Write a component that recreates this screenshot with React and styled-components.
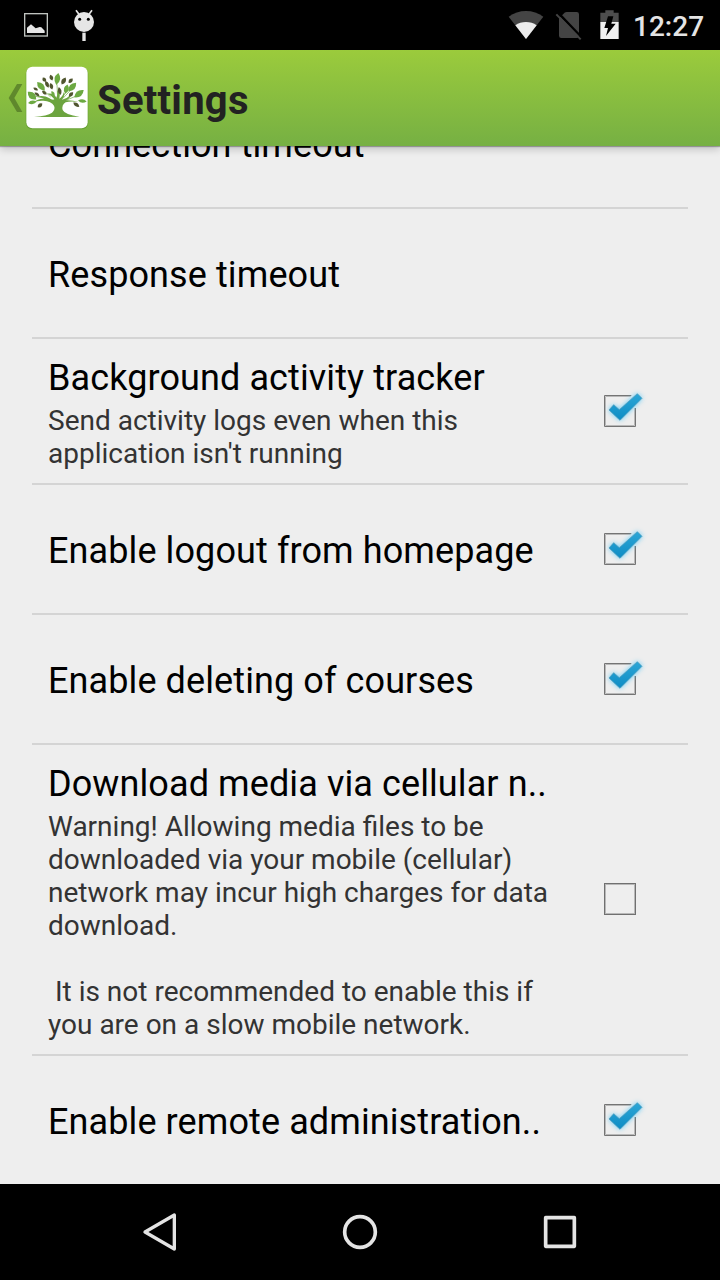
import React from "react";
import styled, { createGlobalStyle } from "styled-components";

const GlobalStyle = createGlobalStyle`
  * { box-sizing: border-box; }
  body {
    margin: 0;
    background: #eee;
    font-family: Roboto, "Liberation Sans", sans-serif;
  }
`;

const Screen = styled.div`
  width: 720px;
  height: 1280px;
  display: flex;
  flex-direction: column;
  overflow: hidden;
  background: #eee;
`;

const StatusBar = styled.div`
  flex: 0 0 50px;
  display: flex;
  justify-content: space-between;
  background: #000;
  color: #e4e4e4;
`;

const StatusGroup = styled.div`
  display: flex;
  align-items: center;
  padding-right: ${(p) => (p.$end ? "16px" : "0")};
`;

const Clock = styled.span`
  width: 71px;
  margin-left: 13px;
  font-size: 28px;
  line-height: 34px;
  font-weight: 500;
  white-space: nowrap;
  padding-top: 3px;
`;

const ActionBar = styled.header`
  flex: 0 0 96px;
  display: flex;
  align-items: center;
  background: linear-gradient(#9bcb3c, #76b043);
  box-shadow: 0 1px 1px rgba(0, 0, 0, 0.28), 0 3px 8px rgba(0, 0, 0, 0.2);
  z-index: 1;
`;

const Icon = styled.svg`
  display: block;
  flex: none;
`;

const ScreenTitle = styled.h1`
  margin: 0 0 0 8px;
  padding-top: 5px;
  font-size: 40px;
  line-height: 48px;
  font-weight: 700;
  letter-spacing: 0.25px;
  color: #222;
`;

const List = styled.main`
  flex: 0 0 1038px;
  display: flex;
  flex-direction: column;
  justify-content: flex-end;
  overflow: hidden;
  padding: 0 32px;
`;

const Row = styled.section`
  flex: none;
  height: ${(p) => p.$height}px;
  display: flex;
  align-items: center;
  padding-left: 16px;
  & + & {
    border-top: 2px solid #d4d4d4;
  }
`;

const Labels = styled.div`
  flex: 0 0 542px;
  padding-top: ${(p) => (p.$summary ? "5px" : "4px")};
`;

const Title = styled.div`
  font-size: 36px;
  line-height: 42px;
  letter-spacing: 0.1px;
  color: #000;
  white-space: nowrap;
`;

const Summary = styled.div`
  margin-top: 5px;
  font-size: 28px;
  line-height: 33px;
  color: #333;
  white-space: pre;
`;

const GlowCheck = styled.path`
  filter: drop-shadow(0 0 8px rgba(80, 200, 250, 0.9));
`;

function NotificationIcons() {
  return (
    <Icon width="120" height="50" viewBox="0 0 360 150">
      <rect x="74" y="41" width="68" height="67" fill="none" stroke="#bfc3bf" strokeWidth="4" />
      <path d="M81 99V83l12-10 14 12 12-4 5 1 10 10v7z" fill="#e6e6e6" />
      <g fill="#e6e6e6">
        <circle cx="252" cy="66" r="30" />
        <rect x="247" y="98" width="10" height="25" />
        <path d="M228 31l10 13M276 31l-10 13" stroke="#e6e6e6" strokeWidth="5" />
      </g>
      <circle cx="239" cy="58" r="4.5" />
      <circle cx="265" cy="58" r="4.5" />
    </Icon>
  );
}

function SystemIcons() {
  return (
    <Icon width="120" height="50" viewBox="0 0 360 150">
      <path d="M26 50Q49 33 78 33T130 50L78 117z" fill="#444" />
      <path d="M46 76Q60 66 78 66T110 76L78 117z" fill="#ececec" />
      <path d="M190 42Q194 36 200 36H230Q237 36 237 43V108Q237 114 230 114H184Q177 114 177 107V55z" fill="#444" />
      <path d="M174 38L247 114" stroke="#000" strokeWidth="7" />
      <path d="M169 43L242 118" stroke="#444" strokeWidth="6" />
      <path d="M301 67V38H316V31H341V38H356V67z" fill="#4d4d4d" />
      <path d="M301 66H356V117H301z" fill="#f0f0f0" />
      <path d="M324 49H340L334 71H347L318 108L324 84H313z" fill="#000" />
    </Icon>
  );
}

function UpArrow() {
  return (
    <Icon width="25" height="96" viewBox="0 0 75 288">
      <path d="M51 102H67L43 144L67 186H51L26 144z" fill="#587f29" opacity=".85" />
    </Icon>
  );
}

// x, y, half length, half width, rotation
const GREEN_LEAVES = [
  [100, 42, 18, 8, -80], [51, 64, 17, 8, 48], [24, 92, 17, 9, 42],
  [25, 112, 13, 5, -8], [127, 72, 14, 7, -75], [145, 66, 17, 8, -48],
  [165, 86, 18, 8, -38], [175, 108, 13, 5, 5], [87, 86, 9, 4, 60],
];

const DARK_LEAVES = [
  [82, 38, 9, 5, 70], [61, 44, 8, 5, 55], [69, 58, 11, 5, 65], [82, 64, 10, 5, 75],
  [119, 48, 12, 6, -60], [107, 78, 12, 5, 78], [140, 47, 9, 5, -48],
  [35, 72, 8, 4, 25], [39, 88, 9, 4, 35], [61, 83, 9, 4, 40], [141, 88, 9, 5, -45],
  [48, 121, 9, 5, -40], [157, 119, 11, 5, 35],
];

function Leaf({ shape: [x, y, length, width, angle], color }) {
  return (
    <path
      d={`M${-length} 0Q0 ${-width * 2.2} ${length} 0Q0 ${width * 2.2} ${-length} 0z`}
      transform={`translate(${x} ${y}) rotate(${angle})`}
      fill={color}
    />
  );
}

function TreeLogo() {
  return (
    <Icon width="64" height="64" viewBox="3 3 192 192">
      <rect x="5" y="6" width="188" height="187" rx="20" fill="#4f8b2b" opacity=".45" />
      <rect x="7" y="5.500" width="184" height="184" rx="18" fill="#fff" />
      <path
        d="M30 155.500Q70 153 84 143Q95 133 90 122Q82 108 58 107Q40 106 27 113Q42 100 61 101Q48 94 36 95Q60 89 75 99Q85 106 91 103Q86 94 70 86Q90 84 97 98Q101 91 100 77L104 77Q110 90 106 101Q117 95 119 82L122 86Q120 98 114 104Q128 101 137 92L141 94Q135 102 126 106Q145 105 163 111Q140 107 125 112Q112 120 116 135Q122 149 167 155.500Q98 157 30 155.500z"
        fill="#6ca43f"
      />
      <path
        d="M55 72L80 96M35 94L76 103M99 58L101 98M127 82L109 101M141 74L116 101M157 93L118 109"
        stroke="#6ca43f"
        strokeWidth="2"
      />
      {GREEN_LEAVES.map((shape, i) => (
        <Leaf key={i} shape={shape} color="#6ca942" />
      ))}
      {DARK_LEAVES.map((shape, i) => (
        <Leaf key={i} shape={shape} color="#50552f" />
      ))}
    </Icon>
  );
}

function Checkbox({ checked }) {
  return (
    <Icon width="70" height="62" viewBox="0 0 210 186" role="checkbox" aria-checked={checked}>
      {checked ? (
        <>
          <path d="M122 49.500H46.500V136.500H133.500V84" fill="none" stroke="#b8b8b8" strokeWidth="3" />
          <path d="M124 46.500H43.500V139.500H136.500V84" fill="none" stroke="#747474" strokeWidth="3" />
          <GlowCheck
            d="M57 90L71 74L88 89L142 41L156 55L90 121z"
            fill="url(#tick)"
            stroke="#4e97b5"
            strokeWidth="2"
          />
          <defs>
            <linearGradient id="tick" x1="0" y1="0" x2="0" y2="1">
              <stop offset="0" stopColor="#2ca6d6" />
              <stop offset="1" stopColor="#0d8cc4" />
            </linearGradient>
          </defs>
        </>
      ) : (
        <>
          <rect x="46.500" y="46.500" width="87" height="87" fill="none" stroke="#b8b8b8" strokeWidth="3" />
          <rect x="43.500" y="43.500" width="93" height="93" fill="none" stroke="#707070" strokeWidth="3" />
        </>
      )}
    </Icon>
  );
}

const NavBar = styled.nav`
  flex: 0 0 96px;
  display: flex;
  justify-content: center;
  background: #000;
`;

const SETTINGS = [
  { title: "Connection timeout", height: 128 },
  { title: "Response timeout", height: 130 },
  {
    title: "Background activity tracker",
    summary: "Send activity logs even when this\napplication isn't running",
    height: 146,
    checked: true,
  },
  { title: "Enable logout from homepage", height: 130, checked: true },
  { title: "Enable deleting of courses", height: 130, checked: true },
  {
    title: "Download media via cellular n..",
    summary:
      "Warning! Allowing media files to be\ndownloaded via your mobile (cellular)\nnetwork may incur high charges for data\ndownload.\n\n It is not recommended to enable this if\nyou are on a slow mobile network.",
    height: 311,
    checked: false,
  },
  { title: "Enable remote administration..", height: 130, checked: true },
];

export default function App() {
  return (
    <>
      <GlobalStyle />
      <Screen>
        <StatusBar>
          <StatusGroup>
            <NotificationIcons />
          </StatusGroup>
          <StatusGroup $end>
            <SystemIcons />
            <Clock>12:27</Clock>
          </StatusGroup>
        </StatusBar>
        <ActionBar>
          <UpArrow />
          <TreeLogo />
          <ScreenTitle>Settings</ScreenTitle>
        </ActionBar>
        <List>
          {SETTINGS.map((s) => (
            <Row key={s.title} $height={s.height}>
              <Labels $summary={!!s.summary}>
                <Title>{s.title}</Title>
                {s.summary && <Summary>{s.summary}</Summary>}
              </Labels>
              {s.checked !== undefined && <Checkbox checked={s.checked} />}
            </Row>
          ))}
        </List>
        <NavBar>
          <Icon width="460" height="96" viewBox="0 27 1380 288" fill="none" stroke="#e4e4e4" strokeLinejoin="round">
            <path d="M133 120V222L45 171z" strokeWidth="10" />
            <circle cx="690" cy="171" r="46" strokeWidth="11" />
            <rect x="1247" y="128" width="86" height="86" strokeWidth="11" />
          </Icon>
        </NavBar>
      </Screen>
    </>
  );
}
